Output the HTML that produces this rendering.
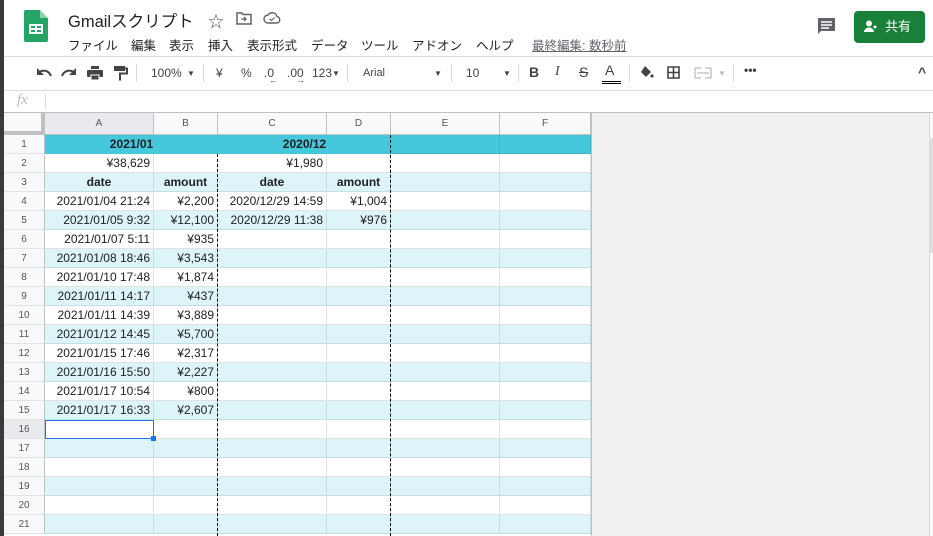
<!DOCTYPE html>
<html><head><meta charset="utf-8"><style>
*{box-sizing:border-box;margin:0;padding:0}
body{width:933px;height:536px;overflow:hidden;background:#fff;font-family:"Liberation Sans","Noto Sans CJK JP",sans-serif;position:relative;color:#202124}
.a{position:absolute}
.menu span{position:absolute;top:0;white-space:nowrap}
.tb{font-size:12px;color:#444;top:66px}
.c{position:absolute;height:19px;line-height:19px;font-size:12px;padding:0 3px;white-space:nowrap;overflow:hidden}
.r{text-align:right}.m{text-align:center}.b{font-weight:bold}
.rh{position:absolute;left:4px;width:41px;height:19px;line-height:19px;text-align:center;font-size:10px;color:#555;background:#f8f9fa;border-right:1px solid #c0c0c0;border-bottom:1px solid #e2e2e2}
.ch{position:absolute;top:113px;height:22px;line-height:22px;text-align:center;font-size:10px;color:#555;background:#f8f9fa;border-right:1px solid #c0c0c0;border-bottom:1px solid #c0c0c0}
</style></head><body>
<div class="a" style="left:0;top:0;width:4px;height:536px;background:#3a3a3a"></div>
<!-- logo -->
<div class="a" style="left:24px;top:10px;width:24px;height:32px;background:#23a566;border-radius:2px"></div>
<div class="a" style="left:40px;top:10px;width:8px;height:8px;background:#8ed1b1;clip-path:polygon(0 0,0 100%,100% 100%)"></div>
<div class="a" style="left:40px;top:10px;width:8px;height:8px;background:#fff;clip-path:polygon(0 0,100% 100%,100% 0)"></div>
<div class="a" style="left:29px;top:24px;width:14px;height:10px;border:2px solid #fff;background:linear-gradient(#fff,#fff) 4px 0/2px 100% no-repeat,linear-gradient(#fff,#fff) 0 2px/100% 2px no-repeat"></div>
<div class="a" style="left:68px;top:8px;font-size:16.5px;color:#202124">Gmailスクリプト</div>
<div class="a" style="left:208px;top:8px;font-size:16px;color:#5f6368">☆</div>
<svg class="a" style="left:236px;top:11px" width="16" height="14" viewBox="0 0 16 14"><path d="M1 2h5l1 1.5h8V13H1z" fill="none" stroke="#5f6368" stroke-width="1.5"/><path d="M5 8h5M8 6l2 2-2 2" stroke="#5f6368" stroke-width="1.3" fill="none"/></svg>
<svg class="a" style="left:263px;top:11px" width="18" height="13" viewBox="0 0 18 13"><path d="M5 12a4 4 0 0 1 0-8 5 5 0 0 1 9 1.5 3.3 3.3 0 0 1 0 6.5z" fill="none" stroke="#5f6368" stroke-width="1.4"/><path d="M6.5 8l2 1.5 3-3" fill="none" stroke="#5f6368" stroke-width="1.2"/></svg>
<div class="a menu" style="left:0;top:35px;font-size:12.5px;color:#202124;width:600px;height:18px"><span style="left:68px">ファイル</span><span style="left:131px">編集</span><span style="left:169px">表示</span><span style="left:208px">挿入</span><span style="left:247px">表示形式</span><span style="left:311px">データ</span><span style="left:361px">ツール</span><span style="left:412px">アドオン</span><span style="left:476px">ヘルプ</span></div>
<div class="a" style="left:532px;top:35px;font-size:12.5px;color:#5f6368;text-decoration:underline">最終編集: 数秒前</div>
<svg class="a" style="left:817px;top:17px" width="19" height="19" viewBox="0 0 19 19"><path d="M1 1h17v13H4l-3 3z" fill="#5f6368"/><path d="M4 5h11M4 8h11M4 11h8" stroke="#fff" stroke-width="1.4"/></svg>
<div class="a" style="left:854px;top:11px;width:71px;height:32px;background:#188038;border-radius:4px;color:#fff;font-size:13px;line-height:32px;padding-left:31px">共有</div>
<svg class="a" style="left:864px;top:20px" width="14" height="13" viewBox="0 0 14 13"><circle cx="5" cy="3.5" r="3" fill="#fff"/><path d="M0 12c0-3 3-4.5 5-4.5s5 1.5 5 4.5z" fill="#fff"/><circle cx="11" cy="7" r="1.5" fill="#fff"/></svg>
<div class="a" style="left:4px;top:56px;width:929px;height:1px;background:#dadce0"></div>
<!-- toolbar -->
<svg class="a" style="left:36px;top:67px" width="16" height="10" viewBox="0 0 16 10"><path d="M15 9C13 4 8 2 3 5" fill="none" stroke="#444" stroke-width="2"/><path d="M1 1v7h7z" fill="#444"/></svg>
<svg class="a" style="left:61px;top:67px" width="16" height="10" viewBox="0 0 16 10"><path d="M1 9C3 4 8 2 13 5" fill="none" stroke="#444" stroke-width="2"/><path d="M15 1v7H8z" fill="#444"/></svg>
<svg class="a" style="left:87px;top:66px" width="16" height="14" viewBox="0 0 16 14"><rect x="4" y="0" width="8" height="3" fill="#444"/><rect x="0" y="4" width="16" height="7" rx="1" fill="#444"/><rect x="4" y="9" width="8" height="5" fill="#444" stroke="#fff" stroke-width="1"/></svg>
<svg class="a" style="left:114px;top:66px" width="14" height="15" viewBox="0 0 14 15"><rect x="0" y="0" width="11" height="5" fill="#444"/><path d="M11 2.5h2v5H6v7" fill="none" stroke="#444" stroke-width="2"/></svg>
<div class="a" style="left:136px;top:64px;width:1px;height:18px;background:#dadce0"></div>
<div class="a tb" style="left:151px">100%</div><div class="a tb" style="left:187px;font-size:8px;top:69px">▼</div>
<div class="a" style="left:203px;top:64px;width:1px;height:18px;background:#dadce0"></div>
<div class="a tb" style="left:216px">¥</div><div class="a tb" style="left:241px">%</div>
<div class="a tb" style="left:264px">.0</div><div class="a" style="left:269px;top:75px;font-size:9px;color:#444">←</div>
<div class="a tb" style="left:287px">.00</div><div class="a" style="left:296px;top:75px;font-size:9px;color:#444">→</div>
<div class="a tb" style="left:312px">123</div><div class="a tb" style="left:332px;font-size:8px;top:69px">▼</div>
<div class="a" style="left:347px;top:64px;width:1px;height:18px;background:#dadce0"></div>
<div class="a tb" style="left:363px;font-size:11px;top:67px">Arial</div><div class="a tb" style="left:434px;font-size:8px;top:69px">▼</div>
<div class="a" style="left:451px;top:64px;width:1px;height:18px;background:#dadce0"></div>
<div class="a tb" style="left:466px">10</div><div class="a tb" style="left:503px;font-size:8px;top:69px">▼</div>
<div class="a" style="left:518px;top:64px;width:1px;height:18px;background:#dadce0"></div>
<div class="a tb" style="left:529px;font-weight:bold;font-size:14px;top:64px">B</div>
<div class="a tb" style="left:555px;font-style:italic;font-size:14px;top:64px;font-family:'Liberation Serif',serif">I</div>
<div class="a tb" style="left:579px;text-decoration:line-through;font-size:14px;top:64px">S</div>
<div class="a tb" style="left:605px;font-size:14px;top:62px">A</div><div class="a" style="left:602px;top:81px;width:19px;height:3px;border-top:1px solid #000;border-bottom:1px solid #000"></div>
<div class="a" style="left:629px;top:64px;width:1px;height:18px;background:#dadce0"></div>
<svg class="a" style="left:639px;top:65px" width="15" height="14" viewBox="0 0 15 14"><path d="M6 1l6 6-5 5-5-5z" fill="#444"/><circle cx="13" cy="11" r="1.6" fill="#444"/></svg>
<svg class="a" style="left:667px;top:66px" width="13" height="13" viewBox="0 0 13 13"><path d="M1 1h11v11H1zM6.5 1v11M1 6.5h11" fill="none" stroke="#444" stroke-width="1.6"/></svg>
<svg class="a" style="left:694px;top:67px" width="18" height="12" viewBox="0 0 18 12"><path d="M1 1h6M11 1h6M1 11h6M11 11h6M1 1v10M17 1v10M3 6h12" fill="none" stroke="#bbb" stroke-width="1.3"/></svg>
<div class="a tb" style="left:718px;font-size:8px;top:69px;color:#bbb">▼</div>
<div class="a" style="left:733px;top:64px;width:1px;height:18px;background:#dadce0"></div>
<div class="a tb" style="left:744px;font-weight:bold;top:63px">•••</div>
<div class="a tb" style="left:918px;top:64px;font-size:14px;font-weight:bold">^</div>
<div class="a" style="left:4px;top:90px;width:929px;height:1px;background:#dadce0"></div>
<div class="a" style="left:17px;top:92px;font-size:15px;font-style:italic;color:#bbb;font-family:'Liberation Serif',serif">fx</div>
<div class="a" style="left:45px;top:94px;width:1px;height:16px;background:#dadce0"></div>
<div class="a" style="left:4px;top:112px;width:929px;height:1px;background:#c0c0c0"></div>
<!-- grey area -->
<div class="a" style="left:591px;top:113px;width:338px;height:423px;background:#f0f0f0;border-left:1px solid #c0c0c0"></div>
<div class="a" style="left:929px;top:113px;width:4px;height:423px;background:#f8f8f8;border-left:1px solid #ddd"></div>
<div class="a" style="left:930px;top:138px;width:3px;height:115px;background:#ddd"></div>
<!-- corner & col headers -->
<div class="a" style="left:4px;top:113px;width:41px;height:22px;background:#f8f9fa;border-right:4px solid #c0c0c0;border-bottom:4px solid #c0c0c0"></div>
<div class="ch" style="left:45px;width:109px;background:#e8eaed">A</div>
<div class="ch" style="left:154px;width:64px">B</div>
<div class="ch" style="left:218px;width:109px">C</div>
<div class="ch" style="left:327px;width:64px">D</div>
<div class="ch" style="left:391px;width:109px">E</div>
<div class="ch" style="left:500px;width:91px">F</div>
<div id="g"></div>
<script>
var cols=[45,154,218,327,391,500,591];
var data={
2:[[0,'¥38,629','r'],[2,'¥1,980','r']],
3:[[0,'date','m b'],[1,'amount','m b'],[2,'date','m b'],[3,'amount','m b']],
4:[[0,'2021/01/04 21:24','r'],[1,'¥2,200','r'],[2,'2020/12/29 14:59','r'],[3,'¥1,004','r']],
5:[[0,'2021/01/05 9:32','r'],[1,'¥12,100','r'],[2,'2020/12/29 11:38','r'],[3,'¥976','r']],
6:[[0,'2021/01/07 5:11','r'],[1,'¥935','r']],
7:[[0,'2021/01/08 18:46','r'],[1,'¥3,543','r']],
8:[[0,'2021/01/10 17:48','r'],[1,'¥1,874','r']],
9:[[0,'2021/01/11 14:17','r'],[1,'¥437','r']],
10:[[0,'2021/01/11 14:39','r'],[1,'¥3,889','r']],
11:[[0,'2021/01/12 14:45','r'],[1,'¥5,700','r']],
12:[[0,'2021/01/15 17:46','r'],[1,'¥2,317','r']],
13:[[0,'2021/01/16 15:50','r'],[1,'¥2,227','r']],
14:[[0,'2021/01/17 10:54','r'],[1,'¥800','r']],
15:[[0,'2021/01/17 16:33','r'],[1,'¥2,607','r']]};
var h='';
for(var r=1;r<=21;r++){
 var y=135+(r-1)*19;
 var bg=r==1?'#46c8dc':(r%2==1?'#ddf4f8':'#fff');
 var lc=r==1?'#3fb5c7':(r%2==1?'#c3dfe2':'#e2e2e2');
 h+='<div class="rh" style="top:'+y+'px;'+(r==16?'background:#e8eaed':'')+'">'+r+'</div>';
 for(var c=0;c<6;c++){
  h+='<div class="a" style="left:'+cols[c]+'px;top:'+y+'px;width:'+(cols[c+1]-cols[c])+'px;height:19px;background:'+bg+';border-right:1px solid '+lc+';border-bottom:1px solid '+lc+'"></div>';
 }
 if(r==1){
  h+='<div class="a" style="left:45px;top:135px;width:173px;height:19px;background:#46c8dc"></div><div class="a" style="left:218px;top:135px;width:173px;height:19px;background:#46c8dc"></div>';
  h+='<div class="c m b" style="left:45px;top:135px;width:173px">2021/01</div><div class="c m b" style="left:218px;top:135px;width:173px">2020/12</div>';
 }
 (data[r]||[]).forEach(function(d){h+='<div class="c '+d[2]+'" style="left:'+cols[d[0]]+'px;top:'+y+'px;width:'+(cols[d[0]+1]-cols[d[0]]-1)+'px">'+d[1]+'</div>';});
}
h+='<div class="a" style="left:217px;top:154px;height:382px;border-left:1px dashed #000"></div>';
h+='<div class="a" style="left:390px;top:135px;height:401px;border-left:1px dashed #000"></div>';
h+='<div class="a" style="left:45px;top:420px;width:109px;height:19px;border:1px solid #1a73e8"></div>';
h+='<div class="a" style="left:151px;top:436px;width:5px;height:5px;background:#1a73e8"></div>';
document.getElementById('g').innerHTML=h;
</script>
</body></html>
